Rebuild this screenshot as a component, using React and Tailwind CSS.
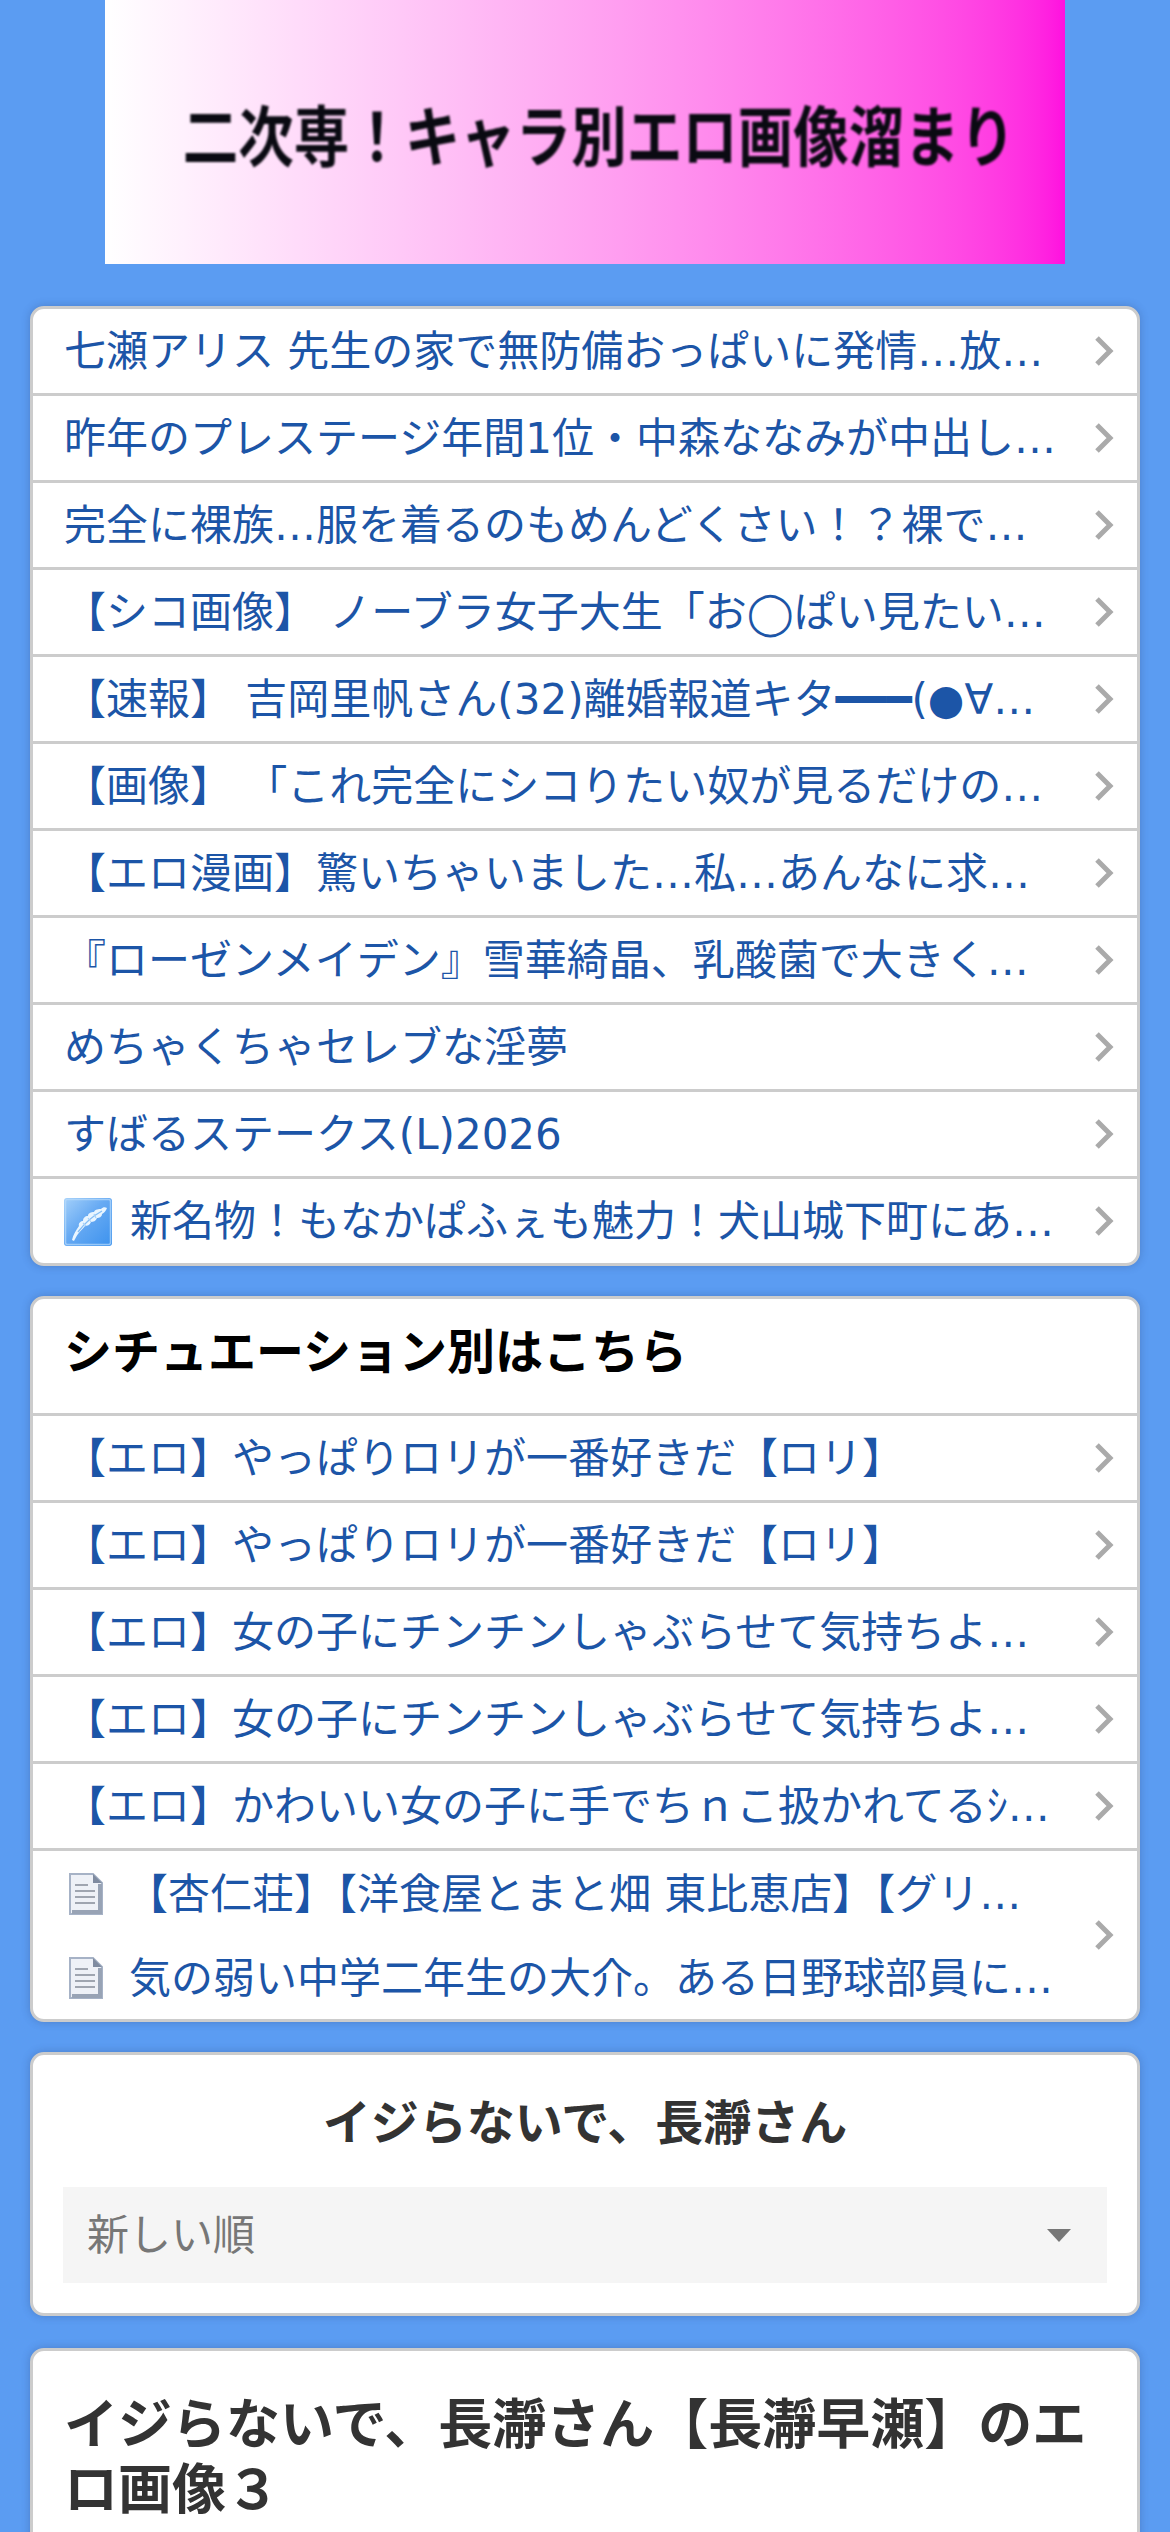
import React from "react";

const font = "font-['DejaVu_Sans','Noto_Sans_CJK_JP',sans-serif]";

const Chevron = () => (
  <svg width="24" height="34" viewBox="0 0 24 34" className="shrink-0" aria-hidden="true">
    <path d="M6 4 L19 17 L6 30" fill="none" stroke="#aaaaaa" strokeWidth="5" />
  </svg>
);

const Feather = () => (
  <svg width="48" height="48" viewBox="0 0 48 48" className="shrink-0 blur-[0.6px]" aria-hidden="true">
    <defs>
      <linearGradient id="fb" x1="0" y1="0" x2="1" y2="1">
        <stop offset="0" stopColor="#a4d0fa" />
        <stop offset="0.45" stopColor="#67aaf3" />
        <stop offset="1" stopColor="#3c92ee" />
      </linearGradient>
    </defs>
    <rect width="48" height="48" rx="3" fill="url(#fb)" />
    <rect x="1.5" y="1.5" width="45" height="45" rx="2" fill="none" stroke="#b9dcfb" strokeWidth="1.5" opacity="0.7" />
    <path d="M8 42 C9 37 12 32 15 28 C14 25 17 23 19 23 C19 20 21 18 24 18 C24 15 27 14 30 14 C31 11 35 11 37 11 C39 9 41 9 43 10 C42 13 40 15 38 16 C38 19 35 20 33 20 C32 23 29 24 27 24 C26 27 23 28 21 28 C19 31 16 33 14 36 C12 39 11 41 10 43 Z" fill="#e9f5ff" />
    <path d="M14 34 C20 26 27 19 38 13" stroke="#84bdf5" strokeWidth="1.4" fill="none" />
    <path d="M19 25 L22 28 M24 20 L27 24 M30 16 L32 20" stroke="#a9d2f8" strokeWidth="1.2" />
  </svg>
);

const Doc = () => (
  <svg width="34" height="42" viewBox="0 0 34 42" className="shrink-0 blur-[0.5px]" aria-hidden="true">
    <path d="M1 1 H24 L33 10 V41 H1 Z" fill="#eef1f7" stroke="#a6b2c6" strokeWidth="2" />
    <path d="M24 1 V10 H33 Z" fill="#7f8ba0" />
    <path d="M31 11 V39 H3" fill="none" stroke="#98a3b5" strokeWidth="4" />
    <path d="M6 12 H19 M6 18 H26 M6 24 H26 M6 30 H26" stroke="#9fa5b0" strokeWidth="2.2" />
  </svg>
);

const Row = ({ children, first }) => (
  <li className={`flex items-center justify-between pl-[31px] pr-[22px] ${first ? "h-[84px]" : "h-[87px] border-t-[3px] border-[#cccccc]"}`}>
    <span className="min-w-0 flex-1 whitespace-nowrap pt-[2px] text-[42px] leading-[50px] text-[#1c55a7]">{children}</span>
    <Chevron />
  </li>
);

const Card = ({ children, className = "" }) => (
  <section className={`rounded-[14px] border-[3px] border-[#cccccc] bg-white shadow-[0_0_8px_rgba(40,60,110,0.3)] ${className}`}>
    {children}
  </section>
);

const news = [
  "七瀬アリス 先生の家で無防備おっぱいに発情…放…",
  "昨年のプレステージ年間1位・中森ななみが中出し…",
  "完全に裸族…服を着るのもめんどくさい！？裸で…",
  "【シコ画像】 ノーブラ女子大生「お◯ぱい見たい…",
  "【速報】 吉岡里帆さん(32)離婚報道キタ━━━(●∀…",
  "【画像】 「これ完全にシコりたい奴が見るだけの…",
  "【エロ漫画】驚いちゃいました…私…あんなに求…",
  "『ローゼンメイデン』雪華綺晶、乳酸菌で大きく…",
  "めちゃくちゃセレブな淫夢",
  "すばるステークス(L)2026",
];

const situations = [
  "【エロ】やっぱりロリが一番好きだ【ロリ】",
  "【エロ】やっぱりロリが一番好きだ【ロリ】",
  "【エロ】女の子にチンチンしゃぶらせて気持ちよ…",
  "【エロ】女の子にチンチンしゃぶらせて気持ちよ…",
  "【エロ】かわいい女の子に手でちｎこ扱かれてるｼ…",
];

export default function App() {
  return (
    <div className={`h-[2532px] overflow-hidden bg-[#5b9cf2] px-[30px] ${font}`}>
      <header className="mx-auto flex h-[264px] w-[960px] items-end justify-center bg-gradient-to-r from-white to-[#ff0fdf] pb-[96px] pl-[28px]">
        <div className="origin-center scale-y-[1.18] text-[55.5px] font-bold leading-[70px] text-[#0a0a12] blur-[0.8px] font-['Noto_Sans_CJK_JP',sans-serif]">
          二次専！キャラ別エロ画像溜まり
        </div>
      </header>

      <Card className="mt-[42px]">
        <ul>
          {news.map((t, i) => (
            <Row key={i} first={i === 0}>{t}</Row>
          ))}
          <Row>
            <span className="flex items-center gap-[18px]">
              <Feather />
              <span>新名物！もなかぱふぇも魅力！犬山城下町にあ…</span>
            </span>
          </Row>
        </ul>
      </Card>

      <Card className="mt-[30px]">
        <h2 className="flex h-[114px] items-center pb-[8px] pl-[31px] text-[48px] font-bold leading-none text-black">
          シチュエーション別はこちら
        </h2>
        <ul>
          {situations.map((t, i) => (
            <Row key={i}>{t}</Row>
          ))}
          <li className="flex h-[171px] items-center justify-between border-t-[3px] border-[#cccccc] pl-[36px] pr-[22px]">
            <div className="min-w-0 flex-1 whitespace-nowrap pt-[2px] text-[42px] text-[#1c55a7]">
              <div className="flex h-[84px] items-center gap-[23px]">
                <Doc />
                <span>【杏仁荘】【洋食屋とまと畑 東比恵店】【グリ…</span>
              </div>
              <div className="flex h-[84px] items-center gap-[26px]">
                <Doc />
                <span>気の弱い中学二年生の大介。ある日野球部員に…</span>
              </div>
            </div>
            <Chevron />
          </li>
        </ul>
      </Card>

      <Card className="mt-[30px] px-[30px] pb-[30px]">
        <h2 className="flex h-[132px] items-center justify-center pt-[4px] text-[48px] font-bold leading-none text-[#333333]">
          イジらないで、長瀞さん
        </h2>
        <div className="flex h-[96px] items-center justify-between bg-[#f5f5f5] pl-[24px] pr-[36px]">
          <span className="text-[42px] text-[#777777]">新しい順</span>
          <span className="h-0 w-0 border-x-[12px] border-t-[13px] border-x-transparent border-t-[#777777]" />
        </div>
      </Card>

      <Card className="mt-[32px] h-[400px] px-[31px] pt-[42px]">
        <h1 className="text-[54px] font-bold leading-[65px] text-[#333333]">
          イジらないで、長瀞さん【長瀞早瀬】のエロ画像３
        </h1>
      </Card>
    </div>
  );
}
